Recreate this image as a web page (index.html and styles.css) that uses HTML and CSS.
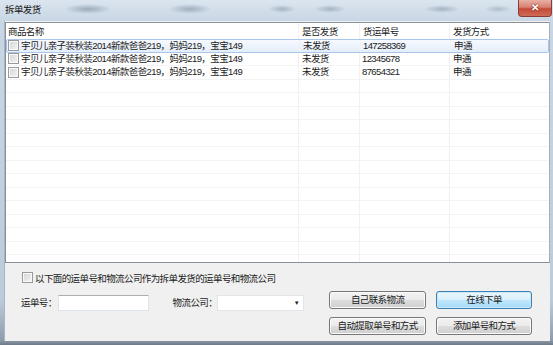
FILE: index.html
```html
<!DOCTYPE html>
<html lang="zh-CN">
<head>
    <meta charset="UTF-8">
    <title>拆单发货</title>
    <link rel="stylesheet" href="styles.css">
</head>
<body>
    <div class="window">
        <div class="titlebar">
            <span class="title">拆单发货</span>
            <span class="close-btn">✕</span>
        </div>

        <div class="client">
            <div class="list">
                <div class="list-row list-head">
                    <div class="cell">商品名称</div>
                    <div class="cell">是否发货</div>
                    <div class="cell">货运单号</div>
                    <div class="cell">发货方式</div>
                </div>
                <div class="list-row selected">
                    <div class="cell"><span class="check"></span>宇贝儿亲子装秋装2014新款爸爸219，妈妈219，宝宝149</div>
                    <div class="cell">未发货</div>
                    <div class="cell num">147258369</div>
                    <div class="cell">申通</div>
                </div>
                <div class="list-row">
                    <div class="cell"><span class="check"></span>宇贝儿亲子装秋装2014新款爸爸219，妈妈219，宝宝149</div>
                    <div class="cell">未发货</div>
                    <div class="cell num">12345678</div>
                    <div class="cell">申通</div>
                </div>
                <div class="list-row">
                    <div class="cell"><span class="check"></span>宇贝儿亲子装秋装2014新款爸爸219，妈妈219，宝宝149</div>
                    <div class="cell">未发货</div>
                    <div class="cell num">87654321</div>
                    <div class="cell">申通</div>
                </div>
                <div class="list-row empty"><div class="cell"></div><div class="cell"></div><div class="cell"></div><div class="cell"></div></div>
                <div class="list-row empty"><div class="cell"></div><div class="cell"></div><div class="cell"></div><div class="cell"></div></div>
                <div class="list-row empty"><div class="cell"></div><div class="cell"></div><div class="cell"></div><div class="cell"></div></div>
                <div class="list-row empty"><div class="cell"></div><div class="cell"></div><div class="cell"></div><div class="cell"></div></div>
                <div class="list-row empty"><div class="cell"></div><div class="cell"></div><div class="cell"></div><div class="cell"></div></div>
                <div class="list-row empty"><div class="cell"></div><div class="cell"></div><div class="cell"></div><div class="cell"></div></div>
                <div class="list-row empty"><div class="cell"></div><div class="cell"></div><div class="cell"></div><div class="cell"></div></div>
                <div class="list-row empty"><div class="cell"></div><div class="cell"></div><div class="cell"></div><div class="cell"></div></div>
                <div class="list-row empty"><div class="cell"></div><div class="cell"></div><div class="cell"></div><div class="cell"></div></div>
                <div class="list-row empty"><div class="cell"></div><div class="cell"></div><div class="cell"></div><div class="cell"></div></div>
                <div class="list-row empty"><div class="cell"></div><div class="cell"></div><div class="cell"></div><div class="cell"></div></div>
                <div class="list-row empty"><div class="cell"></div><div class="cell"></div><div class="cell"></div><div class="cell"></div></div>
                <div class="list-row empty"><div class="cell"></div><div class="cell"></div><div class="cell"></div><div class="cell"></div></div>
                <div class="list-row empty"><div class="cell"></div><div class="cell"></div><div class="cell"></div><div class="cell"></div></div>
            </div>

            <div class="panel">
                <label class="check-row"><span class="check"></span>以下面的运单号和物流公司作为拆单发货的运单号和物流公司</label>
                <div class="controls">
                    <div class="fields">
                        <span class="field-label">运单号：</span>
                        <span class="textbox"></span>
                        <span class="field-label company">物流公司：</span>
                        <span class="combo"><span class="arrow">▼</span></span>
                    </div>
                    <div class="buttons">
                        <span class="btn">自己联系物流</span>
                        <span class="btn default">在线下单</span>
                        <span class="btn">自动提取单号和方式</span>
                        <span class="btn">添加单号和方式</span>
                    </div>
                </div>
            </div>
        </div>
    </div>
</body>
</html>
```

FILE: styles.css
```css
body {
    margin: 0;
    padding: 0;
    width: 553px;
    height: 345px;
    overflow: hidden;
    font-family: "Liberation Sans", "Noto Sans CJK SC", sans-serif;
    font-size: 9.5px;
    letter-spacing: -0.6px;
    color: #1a1a1a;
}

.window {
    box-sizing: border-box;
    height: 345px;
    display: flex;
    flex-direction: column;
    padding: 0 3px 4px 4px;
    background:
        radial-gradient(ellipse 24px 5px at 88px 9px, rgba(110, 125, 145, 0.55), transparent),
        radial-gradient(ellipse 22px 5px at 190px 9px, rgba(110, 125, 145, 0.5), transparent),
        radial-gradient(ellipse 14px 4px at 282px 9px, rgba(110, 125, 145, 0.45), transparent),
        radial-gradient(ellipse 16px 4px at 330px 9px, rgba(110, 125, 145, 0.45), transparent),
        radial-gradient(ellipse 18px 4px at 442px 9px, rgba(110, 125, 145, 0.45), transparent),
        radial-gradient(ellipse 14px 4px at 498px 9px, rgba(110, 125, 145, 0.35), transparent),
        linear-gradient(to bottom, #dbe5ef 0px, #c9d7e5 20px, #bccbdb 300px, #8f9cad 340px, #6f7a88 345px);
}

.titlebar {
    height: 21px;
    display: flex;
    justify-content: space-between;
    align-items: flex-start;
}

.title {
    padding: 4px 0 0 1px;
    line-height: 12px;
    color: #111;
}

.close-btn {
    width: 34px;
    height: 17px;
    box-sizing: border-box;
    margin-right: -2px;
    border: 1px solid #8c3b32;
    border-top: none;
    border-radius: 0 0 4px 4px;
    background: linear-gradient(to bottom, #e9b1a6 0%, #d8806f 45%, #c24b39 55%, #cf6c55 100%);
    color: #fff;
    font-size: 10px;
    font-weight: bold;
    letter-spacing: 0;
    line-height: 15px;
    text-align: center;
    text-shadow: 0 0 2px #5a1a12;
}

.client {
    flex: 1;
    display: flex;
    flex-direction: column;
    background: #f0f0f0;
    border-left: 1px solid #a7b6c7;
}

/* list view */
.list {
    box-sizing: border-box;
    height: 241px;
    margin-top: 1px;
    border: 1px solid #8a9098;
    border-right-color: #a9afb6;
    background: #fff;
    overflow: hidden;
}

.list-row {
    box-sizing: border-box;
    height: 13.5px;
    display: grid;
    grid-template-columns: 292px 61px 90px 1fr;
    border-bottom: 1px solid #f3f3f3;
    line-height: 12px;
}

.list-head {
    height: 16px;
    border-bottom: none;
    line-height: 15px;
}

.cell {
    display: flex;
    align-items: center;
    padding-left: 3px;
    white-space: nowrap;
    overflow: hidden;
    border-left: 1px solid #f1f1f1;
}

.cell:first-child {
    border-left: none;
    padding-left: 2px;
}

.num {
    padding-left: 2px;
}

.list-row.selected {
    border: 1px solid #a8c6ea;
    border-radius: 2px;
    background: linear-gradient(to bottom, #f6f9fe, #e4eefb);
}

.list-row.selected .cell:first-child {
    padding-left: 1px;
}

.check {
    display: inline-block;
    box-sizing: border-box;
    width: 11px;
    height: 11px;
    margin-right: 2px;
    flex-shrink: 0;
    border: 1px solid #9a9a9a;
    background: linear-gradient(135deg, #d5d5d5, #f4f4f4);
    box-shadow: inset 0 0 0 1px #fafafa;
}

/* lower panel */
.panel {
    flex: 1;
    padding: 9px 0 0 16px;
}

.check-row {
    display: flex;
    align-items: center;
    height: 11px;
    padding-left: 1px;
}

.controls {
    display: flex;
    margin-top: 10px;
}

.fields {
    display: flex;
    align-items: center;
    height: 19px;
}

.field-label {
    line-height: 12px;
}

.company {
    margin-left: 24px;
}

.textbox {
    box-sizing: border-box;
    width: 91px;
    height: 16px;
    margin-left: 1px;
    border: 1px solid #dde3ea;
    border-top-color: #abadb3;
    background: #fff;
}

.combo {
    box-sizing: border-box;
    width: 87px;
    height: 16px;
    margin-left: 0;
    display: flex;
    align-items: center;
    justify-content: flex-end;
    padding-right: 4px;
    border: 1px solid #e2e6ea;
    background: #fff;
}

.arrow {
    font-size: 6px;
    line-height: 6px;
    color: #222;
}

.buttons {
    display: grid;
    grid-template-columns: 97px 96px;
    grid-auto-rows: 18px;
    column-gap: 10px;
    row-gap: 8px;
    margin-left: 25px;
    margin-top: -2px;
}

.btn {
    box-sizing: border-box;
    display: flex;
    align-items: center;
    justify-content: center;
    border: 1px solid #777;
    border-radius: 3px;
    background: linear-gradient(to bottom, #f3f3f3 0%, #ebebeb 48%, #dddddd 52%, #cfcfcf 100%);
    box-shadow: inset 0 0 0 1px #fbfbfb;
    line-height: 12px;
}

.btn.default {
    border-color: #3c7fb1;
    background: linear-gradient(to bottom, #eaf6fd 0%, #d9f0fc 48%, #bee6fd 52%, #a7d9f5 100%);
    box-shadow: inset 0 0 0 1px #c9e8fa;
}
```
